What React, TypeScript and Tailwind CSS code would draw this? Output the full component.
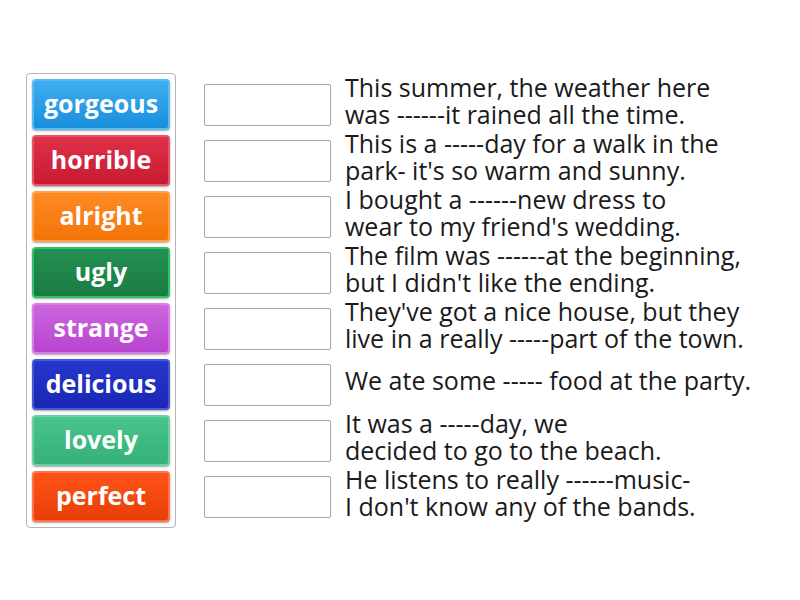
import React from "react";

///////////////////////////////////////////////////////////////////////////////
///////// Match up — word tiles on the left, gap boxes + sentences ///////////
///////////////////////////////////////////////////////////////////////////////

type Tile = { word: string; className: string };

const tiles: Tile[] = [
  { word: "gorgeous", className: "bg-gradient-to-b from-[#3eadf2] to-[#178fdc] border-[#5cbaf3]" },
  { word: "horrible", className: "bg-gradient-to-b from-[#df3049] to-[#c81a30] border-[#e3566a]" },
  { word: "alright", className: "bg-gradient-to-b from-[#ff8a22] to-[#f27406] border-[#ffa04d]" },
  { word: "ugly", className: "bg-gradient-to-b from-[#229152] to-[#1b7c43] border-[#2fc26a]" },
  { word: "strange", className: "bg-gradient-to-b from-[#cd66de] to-[#b843d0] border-[#d77fe5]" },
  { word: "delicious", className: "bg-gradient-to-b from-[#2537cc] to-[#1a27b4] border-[#4a58d6]" },
  { word: "lovely", className: "bg-gradient-to-b from-[#48c48d] to-[#37b07a] border-[#6bd1a4]" },
  { word: "perfect", className: "bg-gradient-to-b from-[#ff5218] to-[#e83f06] border-[#ff7446]" },
];

const sentences: string[][] = [
  ["This summer, the weather here", "was ------it rained all the time."],
  ["This is a -----day for a walk in the", "park- it's so warm and sunny."],
  ["I bought a ------new dress to", "wear to my friend's wedding."],
  ["The film was ------at the beginning,", "but I didn't like the ending."],
  ["They've got a nice house, but they", "live in a really -----part of the town."],
  ["We ate some ----- food at the party."],
  ["It was a -----day, we", "decided to go to the beach."],
  ["He listens to really ------music-", "I don't know any of the bands."],
];

export default function App() {
  return (
    <div
      className="w-[800px] h-[600px] bg-white flex items-start pl-[26px] pt-[73px]"
      style={{ fontFamily: '"Open Sans", "Liberation Sans", sans-serif' }}
    >
      {/* Word tiles */}
      <div className="w-[150px] border border-[#b5b5b5] rounded-[4px] p-[5px] flex flex-col gap-[5px]">
        {tiles.map((t) => (
          <div
            key={t.word}
            className={`h-[51px] rounded-[4px] border-2 flex items-center justify-center text-white font-bold text-[25px] pb-[2px] shadow-[0_1px_2px_rgba(0,0,0,0.35)] ${t.className}`}
          >
            {t.word}
          </div>
        ))}
      </div>

      {/* Gap boxes + sentences */}
      <div className="ml-[28px] pt-[6px] flex flex-col gap-[5px]">
        {sentences.map((lines, i) => (
          <div key={i} className="h-[51px] flex items-center">
            <div className="w-[127px] h-[42px] border border-[#a8a8a8] rounded-[2px] bg-white shrink-0" />
            <div className="ml-[14px] text-[25px] leading-[27px] text-[#1a1a1a] whitespace-nowrap mb-[8px]">
              {lines.map((l) => (
                <div key={l}>{l}</div>
              ))}
            </div>
          </div>
        ))}
      </div>
    </div>
  );
}
